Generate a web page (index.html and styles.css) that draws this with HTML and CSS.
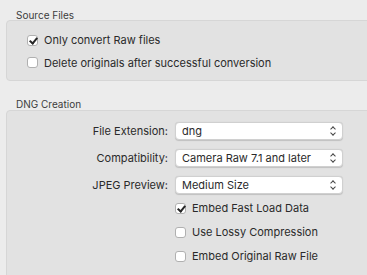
FILE: index.html
```html
<!DOCTYPE html>
<html lang="en">

<head>
  <meta charset="UTF-8">
  <meta name="viewport" content="width=device-width, initial-scale=1.0">
  <title>DNG Converter Preferences</title>
  <link rel="stylesheet" href="styles.css">
</head>

<body>
  <div class="title">Source Files</div>
  <div class="group group-source">
    <div class="check-row">
      <span class="check is-checked"></span>
      <span>Only convert Raw files</span>
    </div>
    <div class="check-row">
      <span class="check"></span>
      <span>Delete originals after successful conversion</span>
    </div>
  </div>

  <div class="title title-dng">DNG Creation</div>
  <div class="group group-dng">
    <div class="form">
      <div class="label">File Extension:</div>
      <div class="select">dng<span class="arrows"></span></div>
      <div class="label">Compatibility:</div>
      <div class="select">Camera Raw 7.1 and later<span class="arrows"></span></div>
      <div class="label">JPEG Preview:</div>
      <div class="select">Medium Size<span class="arrows"></span></div>
    </div>
    <div class="options">
      <div class="check-row">
        <span class="check is-checked"></span>
        <span>Embed Fast Load Data</span>
      </div>
      <div class="check-row">
        <span class="check"></span>
        <span>Use Lossy Compression</span>
      </div>
      <div class="check-row">
        <span class="check"></span>
        <span>Embed Original Raw File</span>
      </div>
    </div>
  </div>
</body>

</html>
```

FILE: styles.css
```css
* {
  margin: 0;
  padding: 0;
  box-sizing: border-box;
}

body {
  background: #ececec;
  font-family: Inter, "Noto Sans", sans-serif;
  font-size: 11px;
  color: #2a2a2a;
  overflow: hidden;
  width: 367px;
  height: 275px;
}

.title {
  font-size: 10px;
  color: #3c3c3c;
  padding-left: 16px;
  height: 20px;
  line-height: 14px;
  padding-top: 8px;
}

.title-dng {
  height: 29px;
  padding-top: 16px;
}

.group {
  margin-left: 6px;
  margin-right: -10px;
  background: #e2e2e2;
  border: 1px solid #d6d6d6;
  border-radius: 4px;
}

.group-source {
  height: 61px;
  padding: 8px 0 0 20px;
}

.group-dng {
  height: 180px;
  padding-top: 11px;
}

.check-row {
  display: flex;
  align-items: center;
  gap: 6px;
  height: 22.5px;
}

.check {
  width: 11px;
  height: 11px;
  background: #fff;
  border: 1px solid #b0b0b0;
  border-radius: 3px;
  position: relative;
  flex: none;
}

.check.is-checked::after {
  content: '';
  position: absolute;
  left: 3px;
  top: 0px;
  width: 3px;
  height: 6px;
  border-right: 2px solid #262626;
  border-bottom: 2px solid #262626;
  transform: rotate(40deg);
}

.form {
  display: grid;
  grid-template-columns: 161px 168px;
  column-gap: 7px;
  row-gap: 9px;
  align-items: center;
}

.label {
  text-align: right;
}

.select {
  position: relative;
  height: 18px;
  line-height: 17px;
  padding-left: 6px;
  background: #fff;
  border: 1px solid #d0d0d0;
  border-radius: 4px;
  box-shadow: 0 0.5px 1px rgba(0, 0, 0, 0.15);
}

.arrows {
  position: absolute;
  right: 6px;
  top: 3px;
  width: 6px;
  height: 10px;
}

.arrows::before,
.arrows::after {
  content: '';
  position: absolute;
  left: 1px;
  width: 3px;
  height: 3px;
  border-left: 1.2px solid #444;
  border-top: 1.2px solid #444;
}

.arrows::before {
  top: 1px;
  transform: rotate(45deg);
}

.arrows::after {
  top: 5px;
  transform: rotate(225deg);
}

.options {
  padding: 2px 0 0 168px;
}

.options .check-row {
  height: 24px;
}
```
